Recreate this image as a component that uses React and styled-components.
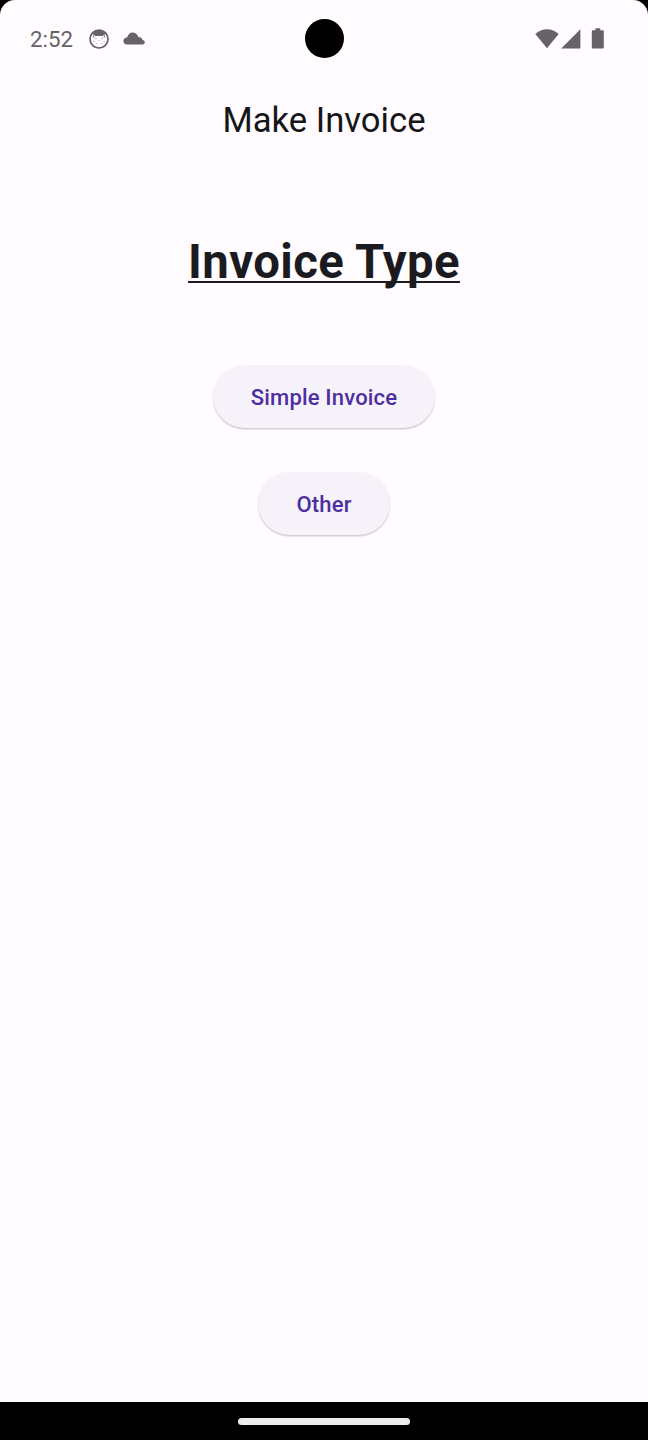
import React from 'react';
import styled, { createGlobalStyle } from 'styled-components';

const GlobalStyle = createGlobalStyle`
  * { box-sizing: border-box; }
  body { margin: 0; background: #000; font-family: Roboto, sans-serif; }
`;

const Phone = styled.div`
  width: 648px;
  height: 1440px;
  display: flex;
  flex-direction: column;
  background: #000;
`;

const Screen = styled.div`
  height: 1402px;
  display: flex;
  flex-direction: column;
  background: #fffbff;
  border-radius: 15px 15px 0 0;
`;

const StatusBar = styled.header`
  height: 77px;
  flex: none;
  display: grid;
  grid-template-columns: 1fr 39px 1fr;
  align-items: center;
  padding: 0 30px;
  color: #656366;
`;

const StatusGroup = styled.div`
  display: flex;
  align-items: center;
  justify-content: ${(p) => (p.$end ? 'flex-end' : 'flex-start')};
  padding-right: ${(p) => (p.$end ? 13 : 0)}px;
`;

const Clock = styled.span`
  width: 58.5px;
  padding-top: 1px;
  font-size: 22.3px;
  line-height: 28px;
`;

const Glyph = styled.svg`
  display: block;
  flex: none;
  margin-left: ${(p) => p.$gap || 0}px;
`;

const Camera = styled.div`
  width: 39px;
  height: 39px;
  border-radius: 50%;
  background: #000;
`;

const AppBar = styled.div`
  height: 86px;
  flex: none;
  display: flex;
  align-items: center;
  justify-content: center;
`;

const Title = styled.h1`
  margin: 0;
  font-size: 34.65px;
  line-height: 44px;
  font-weight: 400;
  color: #161518;
`;

const Content = styled.main`
  display: flex;
  flex-direction: column;
  align-items: center;
  padding-top: 64px;
`;

const Heading = styled.h2`
  margin: 0 0 68px;
  font-size: 47.25px;
  line-height: 70px;
  font-weight: 700;
  letter-spacing: 0.4px;
  color: #1b1b1f;
  text-decoration: underline;
  text-decoration-thickness: 2px;
  text-underline-offset: 3px;
  text-decoration-skip-ink: none;
`;

const PillButton = styled.button`
  height: 63px;
  margin: 0 0 44px;
  padding: 2px 38px 0;
  border: 0;
  border-radius: 32px;
  background: #f6f2fa;
  box-shadow: 0 1.5px 1.5px rgba(0, 0, 0, 0.16), 0 1px 2px rgba(0, 0, 0, 0.05);
  color: #4e2ea0;
  font: 500 22.05px/32px Roboto, sans-serif;
  letter-spacing: 0.16px;
`;

const NavigationBar = styled.footer`
  flex: 1;
  display: flex;
  align-items: center;
  justify-content: center;
`;

const HomeHandle = styled.div`
  width: 172px;
  height: 7px;
  border-radius: 4px;
  background: #ececec;
`;

export default function App() {
  return (
    <Phone>
      <GlobalStyle />
      <Screen>
        <StatusBar>
          <StatusGroup>
            <Clock>2:52</Clock>
            <Glyph width="20" height="20" viewBox="0 0 20 20">
              <circle cx="10" cy="10" r="9" fill="none" stroke="currentColor" strokeWidth="1.7" />
              <path d="M3 5Q6 1 10 1T17 5L15.2 5.4 13.6 7H6.4L4.8 5.4Z" fill="currentColor" />
              <path d="M4.8 5.4 4.3 8.4M15.2 5.4 15.7 8.4" stroke="currentColor" strokeWidth=".8" />
              <path d="M5 8.2h1.6M13.4 8.2H15" stroke="currentColor" strokeWidth=".7" opacity=".6" />
              <g fill="currentColor" opacity=".7">
                <circle cx="7" cy="9.8" r=".6" />
                <circle cx="13" cy="9.8" r=".6" />
                <circle cx="10" cy="11.6" r=".5" />
                <circle cx="4.8" cy="12.4" r=".5" />
                <circle cx="15.2" cy="12.4" r=".5" />
                <circle cx="7.6" cy="14.4" r=".5" />
                <circle cx="12.4" cy="14.4" r=".5" />
              </g>
            </Glyph>
            <Glyph $gap={14} width="22" height="13" viewBox="0 0 22 13">
              <path d="M4 12.4C1.7 12.4.4 11 .4 9 .4 6.9 1.8 5.6 4.2 5.2 5.2 2.4 7 .6 9.4.6c3 0 5 1.6 5.9 4.4 2.5 0 3.9 1.2 4.2 3 1.4.3 2.3 1 2.3 2.2 0 1.4-.9 2.2-2.4 2.2Z" fill="currentColor" />
            </Glyph>
          </StatusGroup>
          <Camera />
          <StatusGroup $end>
            <Glyph width="24" height="20" viewBox="0 0 24 20">
              <path d="M.3 5.1Q5.3.3 12 .3T23.7 5.1L12 19.3Z" fill="currentColor" />
            </Glyph>
            <Glyph $gap={2} width="20" height="20" viewBox="0 0 20 20">
              <path d="M19.4.3V19.5H.2Z" fill="currentColor" />
            </Glyph>
            <Glyph $gap={10} width="14" height="21" viewBox="0 0 14 21">
              <path d="M4.4.3h4.8V2.2h2.4q1.2 0 1.2 1.2v15.9q0 1.2-1.2 1.2H2q-1.2 0-1.2-1.2V3.4Q.8 2.2 2 2.2H4.4Z" fill="currentColor" />
            </Glyph>
          </StatusGroup>
        </StatusBar>
        <AppBar>
          <Title>Make Invoice</Title>
        </AppBar>
        <Content>
          <Heading>Invoice Type</Heading>
          <PillButton>Simple Invoice</PillButton>
          <PillButton>Other</PillButton>
        </Content>
      </Screen>
      <NavigationBar>
        <HomeHandle />
      </NavigationBar>
    </Phone>
  );
}
